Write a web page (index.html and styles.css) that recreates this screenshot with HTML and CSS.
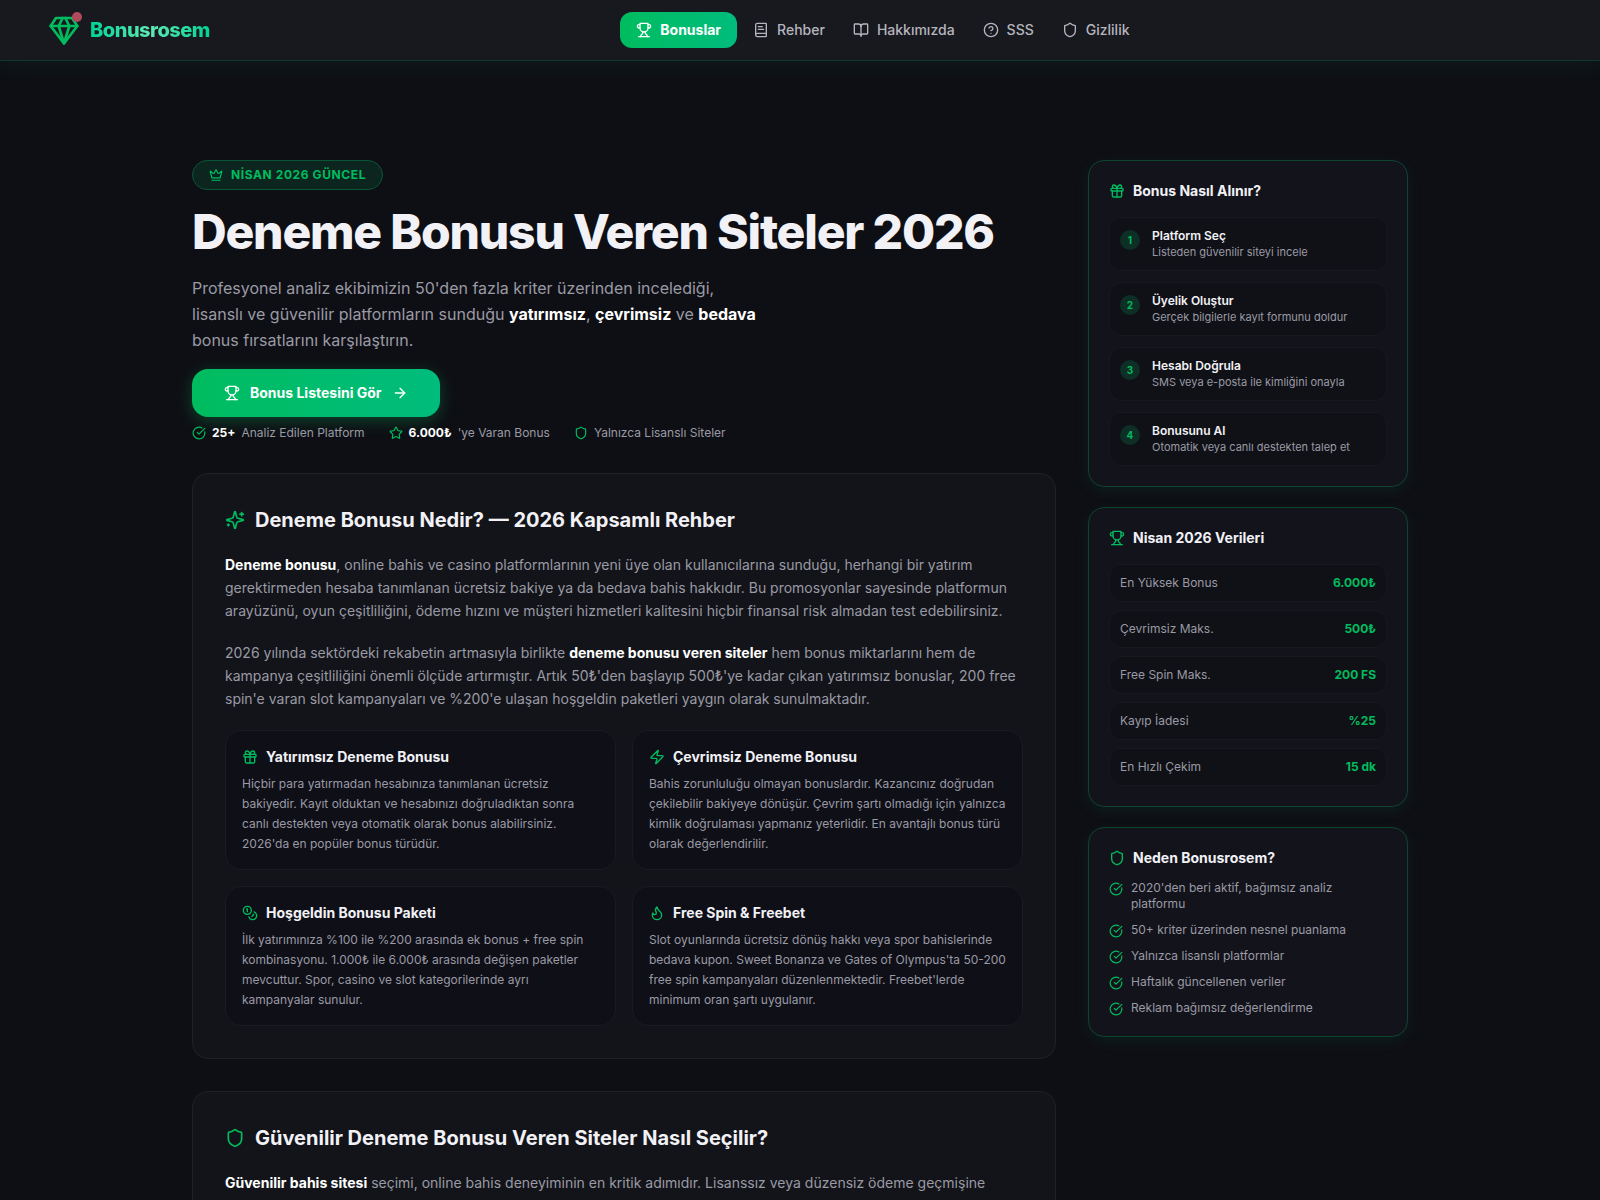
FILE: index.html
```html
<!DOCTYPE html>
<html lang="tr">
<head>
    <meta charset="UTF-8">
    <meta name="viewport" content="width=device-width, initial-scale=1.0">
    <title>Deneme Bonusu Veren Siteler 2026 | Bonusrosem</title>
    <link rel="stylesheet" href="styles.css">
</head>
<body>
    <!-- icon set -->
    <svg class="sprite" aria-hidden="true">
        <symbol id="gem" viewBox="0 0 24 24"><path d="M6 3h12l4 6-10 13L2 9Z"/><path d="M11 3 8 9l4 13 4-13-3-6"/><path d="M2 9h20"/></symbol>
        <symbol id="trophy" viewBox="0 0 24 24"><path d="M6 9H4.500a2.500 2.500 0 0 1 0-5H6"/><path d="M18 9h1.500a2.500 2.500 0 0 0 0-5H18"/><path d="M4 22h16"/><path d="M10 14.660V17c0 .55-.47.98-.97 1.210C7.850 18.750 7 20.240 7 22"/><path d="M14 14.660V17c0 .55.47.98.97 1.210C16.150 18.750 17 20.240 17 22"/><path d="M18 2H6v7a6 6 0 0 0 12 0V2Z"/></symbol>
        <symbol id="book" viewBox="0 0 24 24"><path d="M4 19.500v-15A2.500 2.500 0 0 1 6.500 2H19a1 1 0 0 1 1 1v18a1 1 0 0 1-1 1H6.500a1 1 0 0 1 0-5H20"/><path d="M8 11h8"/><path d="M8 7h6"/></symbol>
        <symbol id="book-open" viewBox="0 0 24 24"><path d="M12 7v14"/><path d="M3 18a1 1 0 0 1-1-1V4a1 1 0 0 1 1-1h5a4 4 0 0 1 4 4 4 4 0 0 1 4-4h5a1 1 0 0 1 1 1v13a1 1 0 0 1-1 1h-6a3 3 0 0 0-3 3 3 3 0 0 0-3-3z"/></symbol>
        <symbol id="help" viewBox="0 0 24 24"><circle cx="12" cy="12" r="10"/><path d="M9.090 9a3 3 0 0 1 5.830 1c0 2-3 3-3 3"/><path d="M12 17h.01"/></symbol>
        <symbol id="shield" viewBox="0 0 24 24"><path d="M20 13c0 5-3.500 7.500-7.660 8.950a1 1 0 0 1-.67-.01C7.500 20.500 4 18 4 13V6a1 1 0 0 1 1-1c2 0 4.500-1.200 6.240-2.720a1.170 1.170 0 0 1 1.520 0C14.510 3.810 17 5 19 5a1 1 0 0 1 1 1z"/></symbol>
        <symbol id="crown" viewBox="0 0 24 24"><path d="M11.562 3.266a.5.5 0 0 1 .876 0L15.390 8.870a1 1 0 0 0 1.516.294L21.183 5.500a.5.5 0 0 1 .798.519l-2.834 10.246a1 1 0 0 1-.956.734H5.810a1 1 0 0 1-.957-.734L2.020 6.020a.5.5 0 0 1 .798-.519l4.276 3.664a1 1 0 0 0 1.516-.294z"/><path d="M5 21h14"/></symbol>
        <symbol id="check" viewBox="0 0 24 24"><path d="M21.801 10A10 10 0 1 1 17 3.335"/><path d="m9 11 3 3L22 4"/></symbol>
        <symbol id="star" viewBox="0 0 24 24"><path d="M11.525 2.295a.53.53 0 0 1 .95 0l2.310 4.679a2.123 2.123 0 0 0 1.595 1.160l5.166.756a.53.53 0 0 1 .294.904l-3.736 3.638a2.123 2.123 0 0 0-.611 1.878l.882 5.140a.53.53 0 0 1-.771.56l-4.618-2.428a2.122 2.122 0 0 0-1.973 0L6.396 21.010a.53.53 0 0 1-.77-.56l.881-5.139a2.122 2.122 0 0 0-.611-1.879L2.160 9.795a.53.53 0 0 1 .294-.906l5.165-.755a2.122 2.122 0 0 0 1.597-1.160z"/></symbol>
        <symbol id="arrow" viewBox="0 0 24 24"><path d="M5 12h14"/><path d="m12 5 7 7-7 7"/></symbol>
        <symbol id="sparkles" viewBox="0 0 24 24"><path d="M9.937 15.500A2 2 0 0 0 8.500 14.063l-6.135-1.582a.5.5 0 0 1 0-.962L8.500 9.936A2 2 0 0 0 9.937 8.500l1.582-6.135a.5.5 0 0 1 .963 0L14.063 8.500A2 2 0 0 0 15.500 9.937l6.135 1.581a.5.5 0 0 1 0 .964L15.500 14.063a2 2 0 0 0-1.437 1.437l-1.582 6.135a.5.5 0 0 1-.963 0z"/><path d="M20 3v4"/><path d="M22 5h-4"/><path d="M4 17v2"/><path d="M5 18H3"/></symbol>
        <symbol id="gift" viewBox="0 0 24 24"><rect x="3" y="8" width="18" height="4" rx="1"/><path d="M12 8v13"/><path d="M19 12v7a2 2 0 0 1-2 2H7a2 2 0 0 1-2-2v-7"/><path d="M7.500 8a2.500 2.500 0 0 1 0-5A4.800 8 0 0 1 12 8a4.800 8 0 0 1 4.500-5 2.500 2.500 0 0 1 0 5"/></symbol>
        <symbol id="zap" viewBox="0 0 24 24"><path d="M4 14a1 1 0 0 1-.78-1.630l9.900-10.200a.5.5 0 0 1 .86.46l-1.920 6.020A1 1 0 0 0 13 10h7a1 1 0 0 1 .78 1.630l-9.900 10.200a.5.5 0 0 1-.86-.46l1.920-6.020A1 1 0 0 0 11 14z"/></symbol>
        <symbol id="coins" viewBox="0 0 24 24"><circle cx="8" cy="8" r="6"/><path d="M18.090 10.370A6 6 0 1 1 10.340 18"/><path d="M7 6h1v4"/><path d="m16.710 13.880.7.71-2.820 2.820"/></symbol>
        <symbol id="flame" viewBox="0 0 24 24"><path d="M8.500 14.500A2.500 2.500 0 0 0 11 12c0-1.380-.5-2-1-3-1.072-2.143-.224-4.054 2-6 .5 2.500 2 4.900 4 6.500 2 1.600 3 3.500 3 5.500a7 7 0 1 1-14 0c0-1.153.433-2.294 1-3a2.500 2.500 0 0 0 2.500 2.500z"/></symbol>
    </svg>

    <header class="header">
        <a class="logo" href="#">
            <span class="logo-mark"><svg class="icon"><use href="#gem"/></svg></span>
            <span class="logo-text">Bonusrosem</span>
        </a>
        <nav class="nav">
            <a class="active" href="#bonuslar"><svg class="icon"><use href="#trophy"/></svg>Bonuslar</a>
            <a href="#rehber"><svg class="icon"><use href="#book"/></svg>Rehber</a>
            <a href="#hakkimizda"><svg class="icon"><use href="#book-open"/></svg>Hakkımızda</a>
            <a href="#sss"><svg class="icon"><use href="#help"/></svg>SSS</a>
            <a href="#gizlilik"><svg class="icon"><use href="#shield"/></svg>Gizlilik</a>
        </nav>
    </header>

    <div class="container">
        <main class="main">
            <section class="hero">
                <span class="badge"><svg class="icon small"><use href="#crown"/></svg>NİSAN 2026 GÜNCEL</span>
                <h1>Deneme Bonusu Veren Siteler 2026</h1>
                <p class="lead">Profesyonel analiz ekibimizin 50'den fazla kriter üzerinden incelediği, lisanslı ve güvenilir platformların sunduğu <strong>yatırımsız</strong>, <strong>çevrimsiz</strong> ve <strong>bedava</strong> bonus fırsatlarını karşılaştırın.</p>
                <button class="cta" type="button">
                    <svg class="icon"><use href="#trophy"/></svg>
                    Bonus Listesini Gör
                    <svg class="icon"><use href="#arrow"/></svg>
                </button>
                <ul class="stats">
                    <li><svg class="icon small"><use href="#check"/></svg><strong>25+</strong> <span>Analiz Edilen Platform</span></li>
                    <li><svg class="icon small"><use href="#star"/></svg><strong>6.000₺</strong> <span>'ye Varan Bonus</span></li>
                    <li><svg class="icon small"><use href="#shield"/></svg><span>Yalnızca Lisanslı Siteler</span></li>
                </ul>
            </section>

            <section class="card" id="rehber">
                <h2><svg class="icon large"><use href="#sparkles"/></svg>Deneme Bonusu Nedir? — 2026 Kapsamlı Rehber</h2>
                <p><strong>Deneme bonusu</strong>, online bahis ve casino platformlarının yeni üye olan kullanıcılarına sunduğu, herhangi bir yatırım gerektirmeden hesaba tanımlanan ücretsiz bakiye ya da bedava bahis hakkıdır. Bu promosyonlar sayesinde platformun arayüzünü, oyun çeşitliliğini, ödeme hızını ve müşteri hizmetleri kalitesini hiçbir finansal risk almadan test edebilirsiniz.</p>
                <p>2026 yılında sektördeki rekabetin artmasıyla birlikte <strong>deneme bonusu veren siteler</strong> hem bonus miktarlarını hem de kampanya çeşitliliğini önemli ölçüde artırmıştır. Artık 50₺'den başlayıp 500₺'ye kadar çıkan yatırımsız bonuslar, 200 free spin'e varan slot kampanyaları ve %200'e ulaşan hoşgeldin paketleri yaygın olarak sunulmaktadır.</p>
                <div class="types">
                    <article class="type">
                        <h3><svg class="icon"><use href="#gift"/></svg>Yatırımsız Deneme Bonusu</h3>
                        <p>Hiçbir para yatırmadan hesabınıza tanımlanan ücretsiz bakiyedir. Kayıt olduktan ve hesabınızı doğruladıktan sonra canlı destekten veya otomatik olarak bonus alabilirsiniz. 2026'da en popüler bonus türüdür.</p>
                    </article>
                    <article class="type">
                        <h3><svg class="icon"><use href="#zap"/></svg>Çevrimsiz Deneme Bonusu</h3>
                        <p>Bahis zorunluluğu olmayan bonuslardır. Kazancınız doğrudan çekilebilir bakiyeye dönüşür. Çevrim şartı olmadığı için yalnızca kimlik doğrulaması yapmanız yeterlidir. En avantajlı bonus türü olarak değerlendirilir.</p>
                    </article>
                    <article class="type">
                        <h3><svg class="icon"><use href="#coins"/></svg>Hoşgeldin Bonusu Paketi</h3>
                        <p>İlk yatırımınıza %100 ile %200 arasında ek bonus + free spin kombinasyonu. 1.000₺ ile 6.000₺ arasında değişen paketler mevcuttur. Spor, casino ve slot kategorilerinde ayrı kampanyalar sunulur.</p>
                    </article>
                    <article class="type">
                        <h3><svg class="icon"><use href="#flame"/></svg>Free Spin &amp; Freebet</h3>
                        <p>Slot oyunlarında ücretsiz dönüş hakkı veya spor bahislerinde bedava kupon. Sweet Bonanza ve Gates of Olympus'ta 50-200 free spin kampanyaları düzenlenmektedir. Freebet'lerde minimum oran şartı uygulanır.</p>
                    </article>
                </div>
            </section>

            <section class="card">
                <h2><svg class="icon large"><use href="#shield"/></svg>Güvenilir Deneme Bonusu Veren Siteler Nasıl Seçilir?</h2>
                <p><strong>Güvenilir bahis sitesi</strong> seçimi, online bahis deneyiminin en kritik adımıdır. Lisanssız veya düzensiz ödeme geçmişine</p>
            </section>
        </main>

        <aside class="sidebar">
            <section class="panel">
                <h2><svg class="icon"><use href="#gift"/></svg>Bonus Nasıl Alınır?</h2>
                <ol class="steps">
                    <li><span class="num">1</span><div><h3>Platform Seç</h3><p>Listeden güvenilir siteyi incele</p></div></li>
                    <li><span class="num">2</span><div><h3>Üyelik Oluştur</h3><p>Gerçek bilgilerle kayıt formunu doldur</p></div></li>
                    <li><span class="num">3</span><div><h3>Hesabı Doğrula</h3><p>SMS veya e-posta ile kimliğini onayla</p></div></li>
                    <li><span class="num">4</span><div><h3>Bonusunu Al</h3><p>Otomatik veya canlı destekten talep et</p></div></li>
                </ol>
            </section>

            <section class="panel">
                <h2><svg class="icon"><use href="#trophy"/></svg>Nisan 2026 Verileri</h2>
                <dl class="data">
                    <div><dt>En Yüksek Bonus</dt><dd>6.000₺</dd></div>
                    <div><dt>Çevrimsiz Maks.</dt><dd>500₺</dd></div>
                    <div><dt>Free Spin Maks.</dt><dd>200 FS</dd></div>
                    <div><dt>Kayıp İadesi</dt><dd>%25</dd></div>
                    <div><dt>En Hızlı Çekim</dt><dd>15 dk</dd></div>
                </dl>
            </section>

            <section class="panel">
                <h2><svg class="icon"><use href="#shield"/></svg>Neden Bonusrosem?</h2>
                <ul class="reasons">
                    <li><svg class="icon small"><use href="#check"/></svg><span>2020'den beri aktif, bağımsız analiz platformu</span></li>
                    <li><svg class="icon small"><use href="#check"/></svg><span>50+ kriter üzerinden nesnel puanlama</span></li>
                    <li><svg class="icon small"><use href="#check"/></svg><span>Yalnızca lisanslı platformlar</span></li>
                    <li><svg class="icon small"><use href="#check"/></svg><span>Haftalık güncellenen veriler</span></li>
                    <li><svg class="icon small"><use href="#check"/></svg><span>Reklam bağımsız değerlendirme</span></li>
                </ul>
            </section>
        </aside>
    </div>
</body>
</html>
```

FILE: styles.css
```css
* {
    box-sizing: border-box;
    margin: 0;
    padding: 0;
}
body {
    background-color: #0e0f14;
    color: #f1f1f6;
    font-family: Inter, "Liberation Sans", sans-serif;
    font-size: 14px;
    line-height: 20px;
}
ul,
ol {
    list-style: none;
}
a {
    color: inherit;
    text-decoration: none;
}
strong {
    color: #fff;
    font-weight: 700;
}

/* icons */
.sprite {
    display: none;
}
.icon {
    width: 16px;
    height: 16px;
    flex-shrink: 0;
    fill: none;
    stroke: currentColor;
    stroke-width: 2;
    stroke-linecap: round;
    stroke-linejoin: round;
}
.icon.small {
    width: 14px;
    height: 14px;
}
.icon.large {
    width: 20px;
    height: 20px;
}

/* header */
.header {
    display: flex;
    align-items: center;
    justify-content: space-between;
    padding: 12px 48px;
    background-color: #18191f;
    border-bottom: 1px solid #10362b;
    box-shadow: 0 4px 24px rgba(0, 188, 125, 0.08);
}
.header::after {
    content: "";
}
.logo {
    display: flex;
    align-items: center;
    gap: 10px;
}
.logo-mark {
    position: relative;
    display: flex;
    color: #00bc5f;
}
.logo-mark .icon {
    width: 32px;
    height: 32px;
}
.logo-mark::after {
    content: "";
    position: absolute;
    top: -2px;
    right: -2px;
    width: 10px;
    height: 10px;
    border-radius: 50%;
    background-color: #b04a5b;
}
.logo-text {
    font-size: 20px;
    line-height: 28px;
    font-weight: 800;
    letter-spacing: -0.025em;
    color: transparent;
    background: linear-gradient(90deg, #00d492, #5ee9b5, #00d492);
    background-clip: text;
    -webkit-background-clip: text;
}
.nav {
    display: flex;
    gap: 4px;
}
.nav a {
    display: flex;
    align-items: center;
    gap: 8px;
    padding: 8px 12px;
    border-radius: 12px;
    color: #b5b5bd;
    font-weight: 500;
}
.nav a.active {
    padding: 8px 16px;
    background: linear-gradient(90deg, #00bc5f, #00bc7d);
    color: #fff;
    font-weight: 700;
}

/* page */
.container {
    display: grid;
    grid-template-columns: minmax(0, 1fr) 320px;
    gap: 32px;
    align-items: start;
    max-width: 1280px;
    margin: 0 auto;
    padding: 99px 32px 32px;
}
.main {
    display: flex;
    flex-direction: column;
    gap: 32px;
}

/* hero */
.hero {
    display: flex;
    flex-direction: column;
    align-items: flex-start;
}
.badge {
    display: flex;
    align-items: center;
    gap: 8px;
    padding: 6px 16px;
    border: 1px solid #0a5536;
    border-radius: 15px;
    background-color: #0c261f;
    color: #00bc5f;
    font-size: 12px;
    line-height: 16px;
    font-weight: 700;
    letter-spacing: 0.05em;
}
.hero h1 {
    margin: 15px 0 17px;
    font-size: 48px;
    line-height: 53px;
    font-weight: 800;
    letter-spacing: -0.025em;
}
.lead {
    max-width: 576px;
    margin-bottom: 16px;
    color: #9a9aa5;
    font-size: 16px;
    line-height: 26px;
}
.cta {
    display: flex;
    align-items: center;
    gap: 10px;
    height: 48px;
    margin-bottom: 8px;
    padding: 0 32px;
    border: 0;
    border-radius: 16px;
    background: linear-gradient(90deg, #00bc5f, #00bc7d);
    box-shadow: 0 4px 16px rgba(0, 188, 95, 0.3);
    color: #fff;
    font: inherit;
    font-weight: 700;
    cursor: pointer;
}
.stats {
    display: flex;
    flex-wrap: wrap;
    gap: 24px;
    color: #9a9aa5;
    font-size: 12px;
    line-height: 16px;
}
.stats li {
    display: flex;
    align-items: center;
    gap: 6px;
}
.stats .icon {
    color: #00bc5f;
}

/* article cards */
.card {
    padding: 32px;
    border: 1px solid #202127;
    border-radius: 16px;
    background-color: #131419;
}
.card h2 {
    display: flex;
    align-items: center;
    gap: 10px;
    margin-bottom: 19px;
    font-size: 20px;
    line-height: 28px;
    font-weight: 700;
}
.card h2 .icon,
.type .icon,
.panel .icon {
    color: #00bc5f;
}
.card > p {
    margin-bottom: 19px;
    color: #9a9aa5;
    line-height: 23px;
}
.types {
    display: grid;
    grid-template-columns: 1fr 1fr;
    gap: 16px;
    margin-top: 20px;
}
.type {
    padding: 16px 16px 15px;
    border: 1px solid #1a1b21;
    border-radius: 16px;
    background-color: #0f0f17;
}
.type h3 {
    display: flex;
    align-items: center;
    gap: 8px;
    margin-bottom: 7px;
    font-size: 14px;
    font-weight: 700;
}
.type p {
    color: #9a9aa5;
    font-size: 12px;
    line-height: 20px;
}

/* sidebar */
.sidebar {
    display: flex;
    flex-direction: column;
    gap: 20px;
}
.panel {
    padding: 20px;
    border: 1px solid #0d4430;
    border-radius: 16px;
    background-color: #13131b;
    box-shadow: 0 4px 16px rgba(0, 188, 125, 0.08);
}
.panel h2 {
    display: flex;
    align-items: center;
    gap: 8px;
    font-size: 14px;
    font-weight: 700;
}
.steps,
.data {
    display: flex;
    flex-direction: column;
    margin-top: 16px;
    font-size: 12px;
    line-height: 16px;
}
.steps {
    gap: 11px;
}
.data {
    gap: 8px;
}
.steps li,
.data div {
    border: 1px solid #18191e;
    border-radius: 12px;
    background-color: #101116;
}
.steps li {
    display: flex;
    align-items: flex-start;
    gap: 12px;
    padding: 10px;
}
.num {
    width: 20px;
    height: 20px;
    margin-top: 2px;
    border-radius: 50%;
    background-color: #0d2f25;
    color: #00bc5f;
    font-size: 10px;
    line-height: 20px;
    font-weight: 700;
    text-align: center;
}
.steps h3 {
    font-size: 12px;
    font-weight: 600;
}
.steps p {
    color: #9a9aa5;
    font-size: 11px;
}
.data div {
    display: flex;
    justify-content: space-between;
    padding: 10px;
}
.data dt {
    color: #9a9aa5;
}
.data dd {
    color: #00bc5f;
    font-weight: 700;
}
.reasons {
    display: flex;
    flex-direction: column;
    gap: 10px;
    margin-top: 12px;
    color: #9a9aa5;
    font-size: 12px;
    line-height: 16px;
}
.reasons li {
    display: flex;
    align-items: flex-start;
    gap: 8px;
}
.reasons .icon {
    margin-top: 2px;
}
```
